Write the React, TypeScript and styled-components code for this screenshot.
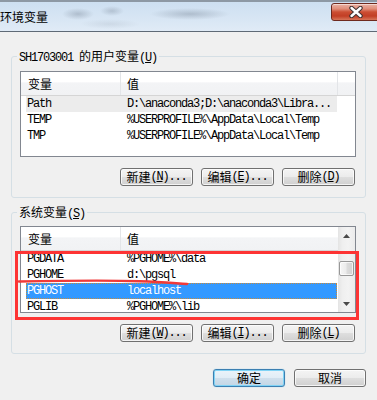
import React from 'react';
import styled, { createGlobalStyle } from 'styled-components';

const Global = createGlobalStyle`
  html, body { margin: 0; padding: 0; background: #f0f0f0; }
  body {
    font-family: "Noto Sans CJK SC", "Liberation Sans", sans-serif;
    font-size: 12px;
    color: #000;
  }
`;

const Window = styled.div`
  position: relative;
  width: 377px;
  height: 400px;
  overflow: hidden;
  background: #f0f0f0;
  display: flex;
  flex-direction: column;
`;

const TitleBar = styled.div`
  flex: none;
  height: 29px;
  border-top: 2px solid #8d98a4;
  border-bottom: 1px solid #5f6a76;
  display: flex;
  align-items: flex-start;
  justify-content: space-between;
  overflow: hidden;
  background:
    radial-gradient(ellipse 16px 6px at 78px 12px, rgba(105, 118, 135, 0.35), transparent),
    radial-gradient(ellipse 12px 5px at 112px 9px, rgba(105, 118, 135, 0.3), transparent),
    radial-gradient(ellipse 40px 6px at 190px 12px, rgba(95, 108, 125, 0.32), transparent),
    radial-gradient(ellipse 30px 5px at 110px 22px, rgba(120, 130, 145, 0.15), transparent),
    linear-gradient(to bottom, #cddff1 0%, #d8e6f4 60%, #e0ebf6 100%);
`;

const Title = styled.div`
  height: 29px;
  display: flex;
  align-items: center;
  font-family: "Noto Sans CJK SC", sans-serif;
  font-size: 12px;
  color: #000;
  padding-left: 0;
`;

const CloseButton = styled.div`
  width: 50px;
  height: 18px;
  margin-top: 1px;
  margin-right: -4px;
  box-sizing: border-box;
  border: 1px solid #6e2a1f;
  border-radius: 3px;
  display: flex;
  align-items: center;
  justify-content: center;
  background: linear-gradient(
    to bottom,
    #eab3a6 0%,
    #e08e7a 30%,
    #cc4e33 50%,
    #c23e25 75%,
    #d77559 100%
  );
  box-shadow: inset 0 1px 0 rgba(255, 255, 255, 0.5);
`;

const Body = styled.div`
  padding: 17px 11px 0 11px;
  display: flex;
  flex-direction: column;
`;

const Group = styled.fieldset<{ $padTop: number; $gap?: number }>`
  margin: ${(p) => p.$gap ?? 0}px 0 0 0;
  padding: ${(p) => p.$padTop}px 9px 11px 8px;
  border: 1px solid #d5dfe5;
  border-radius: 3px;
  min-width: 0;
`;

const Legend = styled.legend`
  padding: 0 2px;
  margin-left: -3px;
  height: 14px;
  line-height: 14px;
  font-size: 12px;
  white-space: nowrap;
`;

const Lat = styled.span`
  font-family: "Liberation Mono", monospace;
  font-size: 12px;
  letter-spacing: -1.2px;
`;

const List = styled.div<{ $h: number }>`
  height: ${(p) => p.$h}px;
  box-sizing: border-box;
  border: 1px solid #828790;
  background: #fff;
  display: flex;
  overflow: hidden;
`;

const ListMain = styled.div`
  flex: 1;
  min-width: 0;
  display: flex;
  flex-direction: column;
`;

const Header = styled.div<{ $filler: boolean }>`
  flex: none;
  display: grid;
  grid-template-columns: ${(p) => (p.$filler ? '100px 217px 1fr' : '100px 217px')};
  height: 24px;
  box-sizing: border-box;
  border-bottom: 1px solid #d5d5d5;
  background: linear-gradient(to bottom, #ffffff 0%, #ffffff 45%, #f3f4f6 46%, #f1f2f4 100%);
`;

const HeadCell = styled.div<{ $pad: number }>`
  box-sizing: border-box;
  border-right: 1px solid #e3e5e8;
  padding-left: ${(p) => p.$pad}px;
  display: flex;
  align-items: center;
  font-family: "Noto Sans CJK SC", sans-serif;
  font-size: 12px;
  &:last-child { border-right: none; }
`;

const Row = styled.div<{ $sel?: 'inactive' | 'active' }>`
  flex: none;
  display: grid;
  grid-template-columns: 95px 1fr;
  height: 16px;
  width: 311px;
  margin-left: 5px;
  box-sizing: border-box;
  align-items: center;
  font-family: "Liberation Mono", monospace;
  font-size: 12px;
  letter-spacing: -1.2px;
  line-height: 16px;
  white-space: nowrap;
  background: ${(p) =>
    p.$sel === 'active' ? '#3399ff' : p.$sel === 'inactive' ? '#ececec' : 'transparent'};
  color: ${(p) => (p.$sel === 'active' ? '#fff' : '#000')};
  outline: ${(p) => (p.$sel === 'active' ? '1px dotted #c88a3a' : 'none')};
  outline-offset: -1px;
`;

const NameCell = styled.div`
  padding-left: 1px;
  overflow: hidden;
`;

const ValueCell = styled.div`
  padding-left: 6px;
  overflow: hidden;
`;

const ScrollBar = styled.div`
  flex: none;
  width: 17px;
  display: flex;
  flex-direction: column;
  background: linear-gradient(to right, #e4e4e4 0%, #efefef 25%, #f3f3f3 60%, #ebebeb 100%);
`;

const ArrowBtn = styled.div`
  flex: none;
  height: 17px;
  display: flex;
  align-items: center;
  justify-content: center;
`;

const Track = styled.div`
  flex: 1;
  display: flex;
  flex-direction: column;
  align-items: center;
`;

const Thumb = styled.div`
  width: 15px;
  height: 15px;
  box-sizing: border-box;
  border: 1px solid #979797;
  border-radius: 2px;
  background: linear-gradient(to right, #f6f6f6 0%, #ececec 45%, #dcdcdc 55%, #d2d2d2 100%);
  box-shadow: inset 0 0 0 1px rgba(255, 255, 255, 0.7);
`;

const ButtonRow = styled.div<{ $top: number; $right: number; $gap: number }>`
  display: flex;
  justify-content: flex-end;
  gap: ${(p) => p.$gap}px;
  margin-top: ${(p) => p.$top}px;
  padding-right: ${(p) => p.$right}px;
`;

const Btn = styled.div<{ $w: number; $default?: boolean }>`
  width: ${(p) => p.$w}px;
  height: 18px;
  box-sizing: border-box;
  border: 1px solid ${(p) => (p.$default ? '#3c7fb1' : '#707070')};
  border-radius: 3px;
  display: flex;
  align-items: center;
  justify-content: center;
  font-family: "Noto Sans CJK SC", sans-serif;
  font-size: 12px;
  line-height: 14px;
  color: #000;
  white-space: nowrap;
  background: ${(p) =>
    p.$default
      ? 'linear-gradient(to bottom, #eaf3fa 0%, #e1edf6 48%, #cfdfec 52%, #c3d6e5 100%)'
      : 'linear-gradient(to bottom, #f4f4f4 0%, #ececec 48%, #dedede 52%, #d0d0d0 100%)'};
  box-shadow: ${(p) =>
    p.$default
      ? 'inset 0 0 0 1px #7fd3f5, 0 0 1px #6cc3ec'
      : 'inset 0 0 0 1px rgba(255,255,255,0.75)'};
`;

const Overlay = styled.svg`
  position: absolute;
  left: 0;
  top: 0;
  pointer-events: none;
`;

type Item = { name: string; value: string; sel?: 'inactive' | 'active' };

const userVars: Item[] = [
  { name: 'Path', value: 'D:\\anaconda3;D:\\anaconda3\\Libra...', sel: 'inactive' },
  { name: 'TEMP', value: '%USERPROFILE%\\AppData\\Local\\Temp' },
  { name: 'TMP', value: '%USERPROFILE%\\AppData\\Local\\Temp' },
];

const sysVars: Item[] = [
  { name: 'PGDATA', value: '%PGHOME%\\data' },
  { name: 'PGHOME', value: 'd:\\pgsql' },
  { name: 'PGHOST', value: 'localhost', sel: 'active' },
  { name: 'PGLIB', value: '%PGHOME%\\lib' },
];

const Tri = ({ up }: { up: boolean }) => (
  <svg width="7" height="4" viewBox="0 0 7 4">
    <path d={up ? 'M0 4 L3.5 0 L7 4 Z' : 'M0 0 L7 0 L3.5 4 Z'} fill="#4a4a4a" />
  </svg>
);

const VarList = ({ items, h, scroll }: { items: Item[]; h: number; scroll: boolean }) => (
  <List $h={h}>
    <ListMain>
      <Header $filler={!scroll}>
        <HeadCell $pad={7}>变量</HeadCell>
        <HeadCell $pad={6}>值</HeadCell>
        {!scroll && <HeadCell $pad={0} />}
      </Header>
      {items.map((it) => (
        <Row key={it.name} $sel={it.sel}>
          <NameCell>{it.name}</NameCell>
          <ValueCell>{it.value}</ValueCell>
        </Row>
      ))}
    </ListMain>
    {scroll && (
      <ScrollBar>
        <ArrowBtn>
          <Tri up />
        </ArrowBtn>
        <Track>
          <Thumb style={{ marginTop: 17 }} />
        </Track>
        <ArrowBtn>
          <Tri up={false} />
        </ArrowBtn>
      </ScrollBar>
    )}
  </List>
);

const Mn = ({ k, dots }: { k: string; dots?: boolean }) => (
  <Lat>
    (<u>{k}</u>){dots ? '...' : ''}
  </Lat>
);

export default function App() {
  return (
    <>
      <Global />
      <Window>
        <TitleBar>
          <Title>环境变量</Title>
          <CloseButton>
            <svg width="14" height="12" viewBox="0 0 14 12">
              <path d="M2.5 2 L11.5 10 M11.5 2 L2.5 10" stroke="#3e3232" strokeWidth="4.4" strokeLinecap="round" />
              <path d="M2.5 2 L11.5 10 M11.5 2 L2.5 10" stroke="#ffffff" strokeWidth="2.4" strokeLinecap="round" />
            </svg>
          </CloseButton>
        </TitleBar>
        <Body>
          <Group $padTop={8}>
            <Legend>
              <Lat>SH1703001 </Lat>的用户变量<Mn k="U" />
            </Legend>
            <VarList items={userVars} h={86} scroll={false} />
            <ButtonRow $top={11} $right={1} $gap={8}>
              <Btn $w={73}>
                新建<Mn k="N" dots />
              </Btn>
              <Btn $w={73}>
                编辑<Mn k="E" dots />
              </Btn>
              <Btn $w={73}>
                删除<Mn k="D" />
              </Btn>
            </ButtonRow>
          </Group>
          <Group $padTop={7} $gap={7}>
            <Legend>
              系统变量<Mn k="S" />
            </Legend>
            <VarList items={sysVars} h={87} scroll />
            <ButtonRow $top={11} $right={1} $gap={8}>
              <Btn $w={73}>
                新建<Mn k="W" dots />
              </Btn>
              <Btn $w={73}>
                编辑<Mn k="I" dots />
              </Btn>
              <Btn $w={73}>
                删除<Mn k="L" />
              </Btn>
            </ButtonRow>
          </Group>
          <ButtonRow $top={15} $right={0} $gap={9}>
            <Btn $w={72} $default>
              确定
            </Btn>
            <Btn $w={72}>取消</Btn>
          </ButtonRow>
        </Body>
        <Overlay width="377" height="400" viewBox="0 0 377 400">
          <rect x="16.5" y="252.5" width="341" height="66" fill="none" stroke="#fd3434" strokeWidth="3" />
          <path
            d="M19 281.5 C 70 280.5, 120 280.5, 140 281.2 S 172 283, 187 284"
            fill="none"
            stroke="#f03a3a"
            strokeWidth="2.4"
            strokeLinecap="round"
          />
        </Overlay>
      </Window>
    </>
  );
}
